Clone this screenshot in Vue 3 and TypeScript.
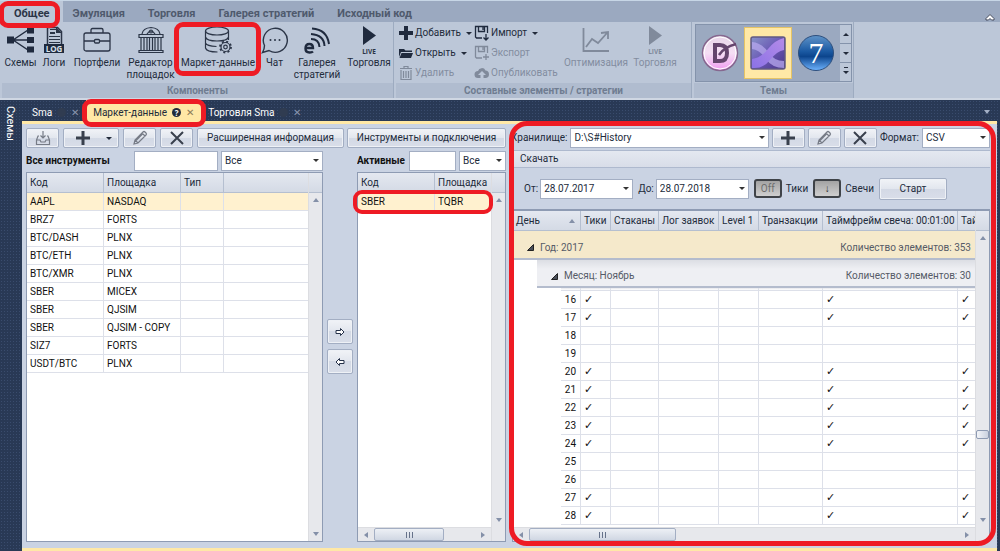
<script setup lang="ts">
import { ref } from 'vue'

interface Instrument { code: string; board: string }

const ribbonTabs = ['Общее', 'Эмуляция', 'Торговля', 'Галерея стратегий', 'Исходный код']
const activeTab = ref('Общее')

const instruments: Instrument[] = [
  { code: 'AAPL', board: 'NASDAQ' },
  { code: 'BRZ7', board: 'FORTS' },
  { code: 'BTC/DASH', board: 'PLNX' },
  { code: 'BTC/ETH', board: 'PLNX' },
  { code: 'BTC/XMR', board: 'PLNX' },
  { code: 'SBER', board: 'MICEX' },
  { code: 'SBER', board: 'QJSIM' },
  { code: 'SBER', board: 'QJSIM - COPY' },
  { code: 'SIZ7', board: 'FORTS' },
  { code: 'USDT/BTC', board: 'PLNX' },
]
const selected = ref(0)

const holidays = [18, 19, 25, 26]
const days = Array.from({ length: 13 }, (_, i) => 16 + i).map((day) => ({
  day,
  loaded: !holidays.includes(day),
}))

const from = ref('28.07.2017')
const to = ref('28.07.2018')
</script>

<template>
  <div class="app">
    <nav class="ribbon-tabs">
      <button
        v-for="tab in ribbonTabs"
        :key="tab"
        class="ribbon-tab"
        :class="{ active: tab === activeTab }"
        @click="activeTab = tab"
      >
        {{ tab }}
        <span v-if="tab === 'Общее'" class="ring ring-general"></span>
      </button>
      <button class="collapse" aria-label="Свернуть ленту">
        <svg width="10" height="8" viewBox="0 0 10 8"><path d="M1 5.5 5 1.5 9 5.5V7H6.500L5 5.500 3.500 7H1z" fill="#fff" stroke="#444b5c" /></svg>
      </button>
    </nav>

    <section class="ribbon">
      <div class="group">
        <div class="group-body">
          <button class="big w37">
            <svg width="28" height="28" viewBox="0 0 28 28"><path d="M6 14 21 4M6 14H21M6 14 21 24" stroke="#1f2a3e" stroke-width="1.500" fill="none" /><path d="M0 10.500h7v7H0zM20 1.500h7v6h-7zM20 11h7v6h-7zM20 20.500h7v6h-7z" fill="#1f2a3e" /></svg>
            <span>Схемы</span>
          </button>
          <button class="big w30">
            <svg width="22" height="28" viewBox="0 0 22 28"><path d="M4.500 18V1.500h10l4 4V18" fill="none" stroke="#2b3547" stroke-width="1.500" /><path d="M13 1v6h6zM7 6h5v2H7z" fill="#2b3547" /><path d="M6 10.500h11M6 13.500h11M6 16.500h11M7 3.500h6" stroke="#2b3547" /><path d="M1 18h20v9H1z" fill="#1f2a3e" /><text x="11" y="25.500" text-anchor="middle" font-family="Open Sans, sans-serif" font-size="8" font-weight="700" fill="#dbe2ec">LOG</text></svg>
            <span>Логи</span>
          </button>
          <button class="big w56">
            <svg width="28" height="28" viewBox="0 0 28 28" fill="none" stroke="#2b3547" stroke-width="1.300"><rect x="1" y="7" width="26" height="18" rx="2" /><path d="M8 7V4q0-1.500 1.500-1.500h9Q20 2.500 20 4v3M1 15h10M17 15h10" /><rect x="11.500" y="13.500" width="5" height="3.500" rx="1" /></svg>
            <span>Портфели</span>
          </button>
          <button class="big w51">
            <svg width="28" height="28" viewBox="0 0 28 28" fill="none" stroke="#2b3547" stroke-width="1.200"><path d="M5 8q1-6 9-6.500 8 .5 9 6.500M2 8.500h24v3H2zM4 12v12M7 12v12M10 12v12M12.500 12v12M15.500 12v12M18 12v12M21 12v12M24 12v12M2 24.500h24v2H2zM10 8q4-6 8 0" /><circle cx="14" cy="5.500" r="1.500" /></svg>
            <span>Редактор площадок</span>
          </button>
          <button class="big w84">
            <svg width="28" height="28" viewBox="0 0 28 28" fill="none" stroke="#2b3547" stroke-width="1.200"><ellipse cx="13" cy="5" rx="11.500" ry="4" /><path d="M1.500 5v17q1 4 12 4M24.500 5v9M1.500 11q1 4 11.500 4t11.500-4M1.500 17q1 3 11 3.500" /><circle cx="21.500" cy="21" r="4.500" /><circle cx="21.500" cy="21" r="1.800" /><circle cx="21.500" cy="21" r="5.500" stroke-width="1.800" stroke-dasharray="2 2.320" /></svg>
            <span class="single">Маркет-данные</span>
            <i class="ring ring-market"></i>
          </button>
          <button class="big w29">
            <svg width="28" height="28" viewBox="0 0 28 28" fill="none"><path d="M3.500 19.500A12 12 0 1 1 8 24.500L1.500 26.500Q3.500 23 3.500 19.500z" stroke="#2b3547" stroke-width="1.400" /><g fill="#2b3547"><circle cx="9.500" cy="14" r="1" /><circle cx="14" cy="14" r="1" /><circle cx="18.500" cy="14" r="1" /></g></svg>
            <span>Чат</span>
          </button>
          <button class="big w56">
            <svg width="28" height="28" viewBox="0 0 28 28" fill="none" stroke="#1f2a3e"><path d="M2.500 22H10q0-4-3.700-4-3.800 0-3.800 4.500 0 4 4 4 2.500 0 3.500-1" stroke-width="2.400" /><path d="M8 13q8 0 8.500 8M8 8q13 1 13.500 12M9 2.500Q24 3.500 26 18" stroke-width="2" /></svg>
            <span>Галерея стратегий</span>
          </button>
          <button class="big w48">
            <svg width="28" height="28" viewBox="0 0 28 28"><path d="m8 0 13 9.500L8 19z" fill="#1f2a3e" /><text x="14" y="27.500" text-anchor="middle" font-family="Open Sans, sans-serif" font-size="6.500" font-weight="700" fill="#2b3547">LIVE</text></svg>
            <span>Торговля</span>
          </button>
        </div>
        <div class="caption">Компоненты</div>
      </div>

      <div class="group">
        <div class="group-body edit">
          <div class="smalls">
            <button class="small">
              <svg width="16" height="16" viewBox="0 0 16 16"><path d="M6 1h4v5h5v4h-5v5H6v-5H1V6h5z" fill="#1f2a3e" /></svg>Добавить<b class="tri"></b>
            </button>
            <button class="small">
              <svg width="16" height="16" viewBox="0 0 16 16"><path d="M1 4h5l1.500 1.500H14V7H3l-2 5z" fill="#1f2a3e" /><path d="M3.500 8H15l-2 5H1.500z" fill="#1f2a3e" /></svg>Открыть<b class="tri"></b>
            </button>
            <button class="small" disabled>
              <svg width="16" height="16" viewBox="0 0 16 16" fill="none" stroke="#808a9b" stroke-width="1.200"><path d="M3 5v9.500h10V5M2 3.500h12M6 3V1.500h4V3M5.500 6v7M8 6v7M10.500 6v7" /></svg>Удалить
            </button>
          </div>
          <div class="smalls second">
            <button class="small">
              <svg width="16" height="16" viewBox="0 0 16 16" fill="none" stroke="#1f2a3e" stroke-width="1.300"><path d="M8 13H2.500L1.500 12V1.500h12V8M4.500 1.500v5h6v-5M9 2v3M12 9v6M9.500 12.500 12 15l2.500-2.500" /></svg>Импорт<b class="tri"></b>
            </button>
            <button class="small" disabled>
              <svg width="16" height="16" viewBox="0 0 16 16" fill="none" stroke="#808a9b" stroke-width="1.300"><path d="M8 13H2.500L1.500 12V1.500h12V8M4.500 1.500v5h6v-5M9 2v3M12 9v6M9 12h6" /></svg>Экспорт
            </button>
            <button class="small" disabled>
              <svg width="16" height="16" viewBox="0 0 16 16"><path d="M4 13a3.500 3.500 0 0 1 0-7 4 4 0 0 1 7.500-.5A3.800 3.800 0 0 1 12 13H9.500v-3H12L8 6l-4 4h2.500v3z" fill="#808a9b" /></svg>Опубликовать
            </button>
          </div>
          <button class="big w68" disabled>
            <svg width="28" height="28" viewBox="0 0 28 28" fill="none" stroke="#808a9b" stroke-width="1.800"><path d="M1.500 2v23H27M4 21l6-8 6 4 9-10M19 7l7-1v7" /></svg>
            <span>Оптимизация</span>
          </button>
          <button class="big w50" disabled>
            <svg width="28" height="28" viewBox="0 0 28 28"><path d="m8 0 13 9.500L8 19z" fill="#808a9b" /><text x="14" y="27.500" text-anchor="middle" font-family="Open Sans, sans-serif" font-size="6.500" font-weight="700" fill="#808a9b">LIVE</text></svg>
            <span>Торговля</span>
          </button>
        </div>
        <div class="caption">Составные элементы / стратегии</div>
      </div>

      <div class="group">
        <div class="group-body">
          <div class="gallery">
            <button class="theme" aria-label="D">
              <svg width="38" height="38" viewBox="0 0 38 38">
                <defs><linearGradient id="pk" x1="0" y1="0" x2="0" y2="1"><stop offset="0" stop-color="#e8d5e8" /><stop offset=".5" stop-color="#f5dff4" /><stop offset="1" stop-color="#f09af0" /></linearGradient></defs>
                <circle cx="19" cy="19" r="17.500" fill="url(#pk)" stroke="#86688f" stroke-width="1.500" /><circle cx="19" cy="19" r="16" fill="none" stroke="#fff" />
                <path d="M12 9h7q9 0 9 10t-9 10h-7zM16 13v12h3q5 0 5-6t-5-6z" fill="#65456d" fill-rule="evenodd" /><path d="M18 21q5-8 17-11" stroke="#65456d" stroke-width="2.500" fill="none" />
              </svg>
            </button>
            <button class="theme chosen" aria-label="X">
              <svg width="36" height="34" viewBox="0 0 36 34">
                <defs><linearGradient id="pu" x1="0" y1="0" x2="1" y2="1"><stop offset="0" stop-color="#8793c8" /><stop offset=".5" stop-color="#6a58b4" /><stop offset="1" stop-color="#4b3788" /></linearGradient><linearGradient id="pl" x1="0" y1="1" x2="1" y2="0"><stop offset="0" stop-color="#8b72e6" /><stop offset="1" stop-color="#b48be8" /></linearGradient></defs>
                <rect x="1" y="1" width="34" height="32" rx="2" fill="url(#pu)" stroke="#625983" stroke-width="1.500" />
                <path d="M2 6q10 1 16 10T34 25v7q-12 0-18-9T2 13z" fill="#b7a8ee" opacity=".75" /><path d="M2 23q9-1 16-10T34 2v12q-7 1-14 10T2 32z" fill="url(#pl)" />
              </svg>
            </button>
            <button class="theme" aria-label="7">
              <svg width="38" height="38" viewBox="0 0 38 38">
                <defs><linearGradient id="bl" x1="0" y1="0" x2="0" y2="1"><stop offset="0" stop-color="#5f93c8" /><stop offset=".45" stop-color="#1b5aa3" /><stop offset=".6" stop-color="#0c458d" /><stop offset="1" stop-color="#6fb4ff" /></linearGradient></defs>
                <circle cx="19" cy="19" r="17.500" fill="url(#bl)" stroke="#2e4f7d" /><text x="19" y="29" text-anchor="middle" font-family="Liberation Serif, serif" font-size="30" fill="#fff">7</text>
              </svg>
            </button>
            <div class="spin">
              <button aria-label="Вверх"><b class="tri up"></b></button>
              <button aria-label="Вниз"><b class="tri"></b></button>
              <button aria-label="Все темы"><b class="tri more"></b></button>
            </div>
          </div>
        </div>
        <div class="caption">Темы</div>
      </div>
    </section>

    <div class="workspace">
      <aside class="side"><button>Схемы</button></aside>
      <main class="docs">
        <div class="doc-tabs">
          <div class="doc"><button class="doc-name">Sma</button><span class="help dim"></span><button class="x" aria-label="Закрыть">✕</button></div>
          <div class="doc current"><button class="doc-name">Маркет-данные</button><span class="help">?</span><button class="x" aria-label="Закрыть">✕</button><i class="ring ring-doc"></i></div>
          <div class="doc"><button class="doc-name">Торговля Sma</button><span class="help dim"></span><button class="x" aria-label="Закрыть">✕</button></div>
          <b class="tri pale"></b>
        </div>

        <div class="page">
          <section class="all">
            <div class="tools">
              <button class="btn w33" aria-label="Загрузить"><svg width="16" height="16" viewBox="0 0 16 16" fill="none" stroke="#767b86" stroke-width="1.200"><path d="M4 6H3L1.500 10v4.500h13V10L13 6h-1M1.500 10H5l1 2h4l1-2h3.500M8 1v7M5.500 5.500 8 8l2.500-2.500" /></svg></button>
              <button class="btn w56 split" aria-label="Добавить"><svg width="14" height="14" viewBox="0 0 14 14"><path d="M5.500 0h3v5.500H14v3H8.500V14h-3V8.500H0v-3h5.500z" fill="#39404d" /></svg><b class="tri"></b></button>
              <button class="btn w33" aria-label="Изменить"><svg width="16" height="16" viewBox="0 0 16 16" fill="none" stroke="#767b86" stroke-width="1.200"><path d="m2 14 1-4 8-8q1-1 2 0l1 1q1 1 0 2l-8 8zM10 3l3 3M4 10.500l7-7M3 10l3 3" /></svg></button>
              <button class="btn w33" aria-label="Удалить"><svg width="14" height="14" viewBox="0 0 14 14"><path d="m1 1 12 12M13 1 1 13" stroke="#39404d" stroke-width="2" /></svg></button>
              <button class="btn grow">Расширенная информация</button>
            </div>
            <div class="filter">
              <label for="find-all" class="title">Все инструменты</label>
              <input id="find-all" class="field w84" type="text" />
              <span class="combo w102"><select aria-label="Тип инструмента"><option>Все</option></select></span>
            </div>
            <div class="frame">
              <div class="sheet">
                <table class="list">
                  <colgroup><col class="w77" /><col class="w77" /><col class="w43" /><col /></colgroup>
                  <thead><tr><th>Код</th><th>Площадка</th><th>Тип</th><th></th></tr></thead>
                  <tbody>
                    <tr v-for="(item, i) in instruments" :key="i" :class="{ picked: i === selected }" @click="selected = i">
                      <td>{{ item.code }}</td><td>{{ item.board }}</td><td></td><td></td>
                    </tr>
                  </tbody>
                </table>
              </div>
              <div class="vbar"><span class="cap"></span><b class="tri bar up"></b><b class="tri bar"></b></div>
            </div>
          </section>

          <div class="move">
            <button class="btn" aria-label="Добавить в активные"><svg width="10" height="8" viewBox="0 0 10 8"><path d="M1 2.500h4.500v-2L9 4 5.500 7.500v-2H1z" fill="#fff" stroke="#253149" /></svg></button>
            <button class="btn" aria-label="Убрать из активных"><svg width="10" height="8" viewBox="0 0 10 8"><path d="M9 2.500H4.500v-2L1 4l3.500 3.500v-2H9z" fill="#fff" stroke="#253149" /></svg></button>
          </div>

          <section class="active-list">
            <div class="tools wide"><button class="btn grow">Инструменты и подключения</button></div>
            <div class="filter">
              <label for="find-active" class="title">Активные</label>
              <input id="find-active" class="field w47" type="text" />
              <span class="combo w47"><select aria-label="Тип активных"><option>Все</option></select></span>
            </div>
            <div class="frame">
              <div class="sheet">
                <table class="list">
                  <colgroup><col class="w77" /><col /></colgroup>
                  <thead><tr><th>Код</th><th>Площадка</th></tr></thead>
                  <tbody><tr class="picked"><td>SBER</td><td>TQBR</td></tr></tbody>
                </table>
                <div class="hbar"><b class="tri bar left"></b><span class="thumb"></span><b class="tri bar right"></b></div>
              </div>
              <div class="vbar"><span class="cap"></span><b class="tri bar up"></b><b class="tri bar"></b><span class="foot"></span></div>
              <i class="ring ring-row"></i>
            </div>
          </section>

          <section class="storage">
            <div class="tools path">
              <label for="store">Хранилище:</label>
              <span class="combo fill"><select id="store"><option>D:\S#History</option></select></span>
              <button class="btn w33" aria-label="Добавить хранилище"><svg width="14" height="14" viewBox="0 0 14 14"><path d="M5.500 0h3v5.500H14v3H8.500V14h-3V8.500H0v-3h5.500z" fill="#39404d" /></svg></button>
              <button class="btn w33" aria-label="Изменить хранилище"><svg width="16" height="16" viewBox="0 0 16 16" fill="none" stroke="#767b86" stroke-width="1.200"><path d="m2 14 1-4 8-8q1-1 2 0l1 1q1 1 0 2l-8 8zM10 3l3 3M4 10.500l7-7M3 10l3 3" /></svg></button>
              <button class="btn w33" aria-label="Удалить хранилище"><svg width="14" height="14" viewBox="0 0 14 14"><path d="m1 1 12 12M13 1 1 13" stroke="#39404d" stroke-width="2" /></svg></button>
              <label for="fmt">Формат:</label>
              <span class="combo w68"><select id="fmt"><option>CSV</option></select></span>
            </div>
            <h2>Скачать</h2>
            <div class="period">
              <label for="from">От:</label>
              <span class="combo w93"><input id="from" v-model="from" type="text" /></span>
              <label for="to" class="next">До:</label>
              <span class="combo w93"><input id="to" v-model="to" type="text" /></span>
              <button id="ticks" class="toggle off">Off</button>
              <label for="ticks">Тики</label>
              <button id="candles" class="toggle">↓</button>
              <label for="candles">Свечи</label>
              <button class="btn start">Старт</button>
            </div>
            <div class="frame history">
              <div class="sheet">
                <table class="list calendar">
                  <colgroup><col class="w24" /><col class="w24" /><col class="w20" /><col class="w30" /><col class="w48" /><col class="w60" /><col class="w40" /><col class="w64" /><col class="w135" /><col /></colgroup>
                  <thead>
                    <tr><th colspan="3"><span class="sorted">День<b class="tri bar up"></b></span></th><th>Тики</th><th>Стаканы</th><th>Лог заявок</th><th>Level 1</th><th>Транзакции</th><th>Таймфрейм свеча: 00:01:00</th><th>Тай</th></tr>
                  </thead>
                  <tbody>
                    <tr class="year"><td colspan="10"><div class="fold"><svg width="7" height="7" viewBox="0 0 7 7"><path d="M6.500.5v6h-6z" fill="#4a4f5a" stroke="#222" /></svg><span>Год: 2017</span><span class="count">Количество элементов: 353</span></div></td></tr>
                    <tr class="month"><td class="gap"></td><td colspan="9" class="band"><div class="fold"><svg width="7" height="7" viewBox="0 0 7 7"><path d="M6.500.5v6h-6z" fill="#4a4f5a" stroke="#222" /></svg><span>Месяц: Ноябрь</span><span class="count">Количество элементов: 30</span></div></td></tr>
                    <tr class="sliver"><td class="gap"></td><td class="gap"></td><td></td><td></td><td></td><td></td><td></td><td></td><td></td><td></td></tr>
                    <tr v-for="d in days" :key="d.day">
                      <td class="gap"></td><td class="gap"></td>
                      <td class="num">{{ d.day }}</td>
                      <td class="mark">{{ d.loaded ? '✓' : '' }}</td><td></td><td></td><td></td><td></td>
                      <td class="mark">{{ d.loaded ? '✓' : '' }}</td>
                      <td class="mark">{{ d.loaded ? '✓' : '' }}</td>
                    </tr>
                  </tbody>
                </table>
                <div class="hbar"><b class="tri bar left"></b><span class="thumb long"></span><b class="tri bar right"></b></div>
              </div>
              <div class="vbar"><span class="cap"></span><b class="tri bar up"></b><span class="knob"></span><b class="tri bar"></b><span class="foot"></span></div>
            </div>
            <i class="ring ring-storage"></i>
          </section>
        </div>
      </main>
    </div>
  </div>
</template>

<style>
body { margin: 0; }
</style>

<style scoped>
* { box-sizing: border-box; }
.app {
  min-height: 100vh;
  display: flex;
  flex-direction: column;
  font: 10px/14px Roboto, "Noto Sans", sans-serif;
  color: #222b3b;
  background: #293955;
  overflow: hidden;
}
button, input, select { font: inherit; color: inherit; margin: 0; }
button { padding: 0; border: 0; background: none; white-space: nowrap; }
svg { display: block; flex: none; }

.ring { position: absolute; border: 5px solid #ee1b24; border-radius: 9px; pointer-events: none; z-index: 5; }
.ring-general { inset: 0 3px -6px -1px; }
.ring-market { inset: 0 -1px 7px -2px; }
.ring-doc { inset: -1px -5px -6px -4px; }
.ring-row { top: 17px; left: -5px; right: 12px; height: 24px; border-width: 4px; }
.ring-storage { inset: -3px 1px -4px -1px; border-radius: 18px; }

.tri { width: 0; height: 0; border: 3px solid transparent; border-top-color: #222b3b; border-bottom: 0; flex: none; }
.tri.up { transform: rotate(180deg); }
.tri.left { transform: rotate(90deg); }
.tri.right { transform: rotate(-90deg); }
.tri.bar { border-width: 4px 3px 0; border-top-color: #8490a8; }
.tri.pale { border-width: 4px 3px 0; border-top-color: #a4b0c6; margin: 10px 7px 0 auto; }

.ribbon-tabs { display: flex; height: 22px; background: #9ba9c0; border-top: 1px solid #c7d6e6; color: #4f5a6d; }
.ribbon-tab { position: relative; padding: 4px 13px 0 10px; font-size: 11px; font-weight: 700; }
.ribbon-tab.active { background: #bcc7d8; color: #2b3547; padding: 4px 13px 0 14px; }
.collapse { margin: 10px 5px 0 auto; }

.ribbon { display: flex; height: 78px; background: #bcc7d8; padding-left: 2px; border-bottom: 2px solid #cfd7e3; }
.group { display: flex; flex-direction: column; border-right: 1px solid #9dabc0; margin-right: 2px; }
.group-body { display: flex; height: 61px; }
.caption { height: 15px; background: #b0bccf; color: #6f7c91; font-weight: 700; text-align: center; line-height: 15px; }
.big { position: relative; flex: none; display: flex; flex-direction: column; align-items: center; padding-top: 4px; line-height: 12px; white-space: normal; }
.big span { margin-top: 3px; }
.big .single { white-space: nowrap; }
.w20 { width: 20px; } .w24 { width: 24px; } .w29 { width: 29px; } .w30 { width: 30px; }
.w33 { width: 33px; } .w37 { width: 37px; } .w40 { width: 40px; } .w43 { width: 43px; }
.w47 { width: 47px; } .w48 { width: 48px; } .w50 { width: 50px; } .w51 { width: 51px; }
.w56 { width: 56px; } .w60 { width: 60px; } .w64 { width: 64px; } .w68 { width: 68px; }
.w77 { width: 77px; } .w84 { width: 84px; } .w93 { width: 93px; } .w102 { width: 102px; }
.w135 { width: 135px; }
button:disabled { color: #838da0; }
.edit { padding: 0 11px 0 2px; }
.smalls { display: flex; flex-direction: column; flex: none; width: 76px; }
.smalls.second { width: 88px; }
.small { display: flex; align-items: center; gap: 1px; height: 20px; padding-top: 2px; }
.small .tri { margin-left: 4px; }

.gallery { display: flex; width: 157px; height: 58px; margin: 2px 1px 0; background: #9ba9c0; border: 1px solid #8493ab; }
.theme { width: 48px; display: grid; place-items: center; }
.theme.chosen { background: #ffe8a6; border: 1px solid #e5c365; margin: 2px 0; }
.spin { margin-left: auto; width: 11px; display: grid; grid-template-rows: 1fr 1fr 1fr; gap: 1px; background: #8493ab; }
.spin button { display: grid; place-items: center; background: #bcc7d8; }
.tri.more { box-shadow: 0 -5px 0 -1px #222b3b; }

.workspace { flex: 1; display: flex; background: #293955 radial-gradient(#3a4c6d 0.5px, transparent 1px) 0 0 / 3px 3px; }
.side { width: 22px; }
.side button { writing-mode: vertical-rl; color: #fff; font-size: 11px; margin: 6px 0 0 3px; }
.docs { flex: 1; min-width: 0; display: flex; flex-direction: column; margin-right: 3px; }
.doc-tabs { display: flex; height: 21px; padding: 0 0 0 3px; }
.doc { position: relative; display: flex; align-items: center; color: #fff; padding: 4px 7px 0 7px; }
.doc .x { color: #8995ad; font-size: 10px; margin-left: 5px; }
.doc.current { background: #ffe8a6; color: #222b3b; }
.doc.current .x { color: #8b7c58; }
.help { width: 9px; height: 9px; border-radius: 50%; background: #222b3b; color: #fff; font: 700 8px/9px "Open Sans", sans-serif; text-align: center; margin-left: 5px; }
.help.dim { background: #303c51; }

.page { flex: 1; display: flex; background: #cad3e3; border-top: 3px solid #ffe8a6; border-bottom: 3px solid #ffe8a6; padding: 0 0 6px 4px; }
.all, .active-list, .storage { display: flex; flex-direction: column; min-width: 0; }
.all { flex: 0 0 30%; min-width: 297px; }
.active-list { flex: 0 0 149px; }
.storage { position: relative; flex: 1; margin-left: 4px; padding: 0 7px 0 1px; }
.tools { display: flex; gap: 4px; height: 24px; padding-top: 4px; }
.all .tools { margin-right: -21px; }
.wide { margin-left: -10px; }
.filter { display: flex; align-items: center; gap: 3px; height: 20px; margin: 3px 0 1px; }
.title { flex: 1; min-width: 0; font-weight: 700; color: #111; white-space: nowrap; overflow: hidden; }
.btn { display: flex; align-items: center; justify-content: center; border: 1px solid #a3aec3; border-radius: 2px; background: linear-gradient(#f1f3f7, #e2e6ee 50%, #d3d9e5 50%, #d9dee9); box-shadow: inset 0 0 0 1px #eef1f6; }
.grow { flex: 1; }
.split { gap: 16px; padding-left: 6px; }
.field { height: 20px; border: 1px solid #a3aec3; background: #fff; padding: 0 3px; }
.combo { position: relative; display: block; height: 20px; background: #fff; border: 1px solid #a3aec3; }
.combo select, .combo input { width: 100%; height: 100%; border: 0; padding: 0 14px 0 3px; background: none; appearance: none; display: block; outline: 0; }
.combo::after { content: ""; position: absolute; right: 3px; top: 50%; margin-top: -2px; border: 3px solid transparent; border-top-color: #333; border-bottom: 0; pointer-events: none; }

.frame { position: relative; flex: 1; display: flex; border: 1px solid #8e9bb3; background: #fff; }
.sheet { flex: 1; min-width: 0; display: flex; flex-direction: column; overflow: hidden; }
.list { width: 100%; table-layout: fixed; border-collapse: separate; border-spacing: 0; color: #111; }
.list th { height: 20px; padding: 0 0 0 3px; text-align: left; font-weight: 400; white-space: nowrap; overflow: hidden; background: linear-gradient(#e4e8f0, #d4dae5); border-right: 1px solid #b5bfd0; border-bottom: 1px solid #b5bfd0; color: #222b3b; }
.list td { height: 18px; padding: 0 0 0 3px; line-height: 14px; white-space: nowrap; border-right: 1px solid #dde0e9; border-bottom: 1px solid #dde0e9; }
.list tr > :last-child { border-right: 0; }
.picked td { background: #fff1cf; }
.vbar { width: 14px; display: flex; flex-direction: column; align-items: center; background: #e7e8ec; border-left: 1px solid #dcdde1; }
.vbar .cap { align-self: stretch; height: 20px; background: linear-gradient(#e4e8f0, #d4dae5); border-bottom: 1px solid #b5bfd0; margin-bottom: 5px; }
.vbar .tri:not(.up) { margin: auto 0 5px; }
.foot { height: 14px; flex: none; }
.hbar { margin-top: auto; height: 14px; display: flex; align-items: center; background: #e7e8ec; border-top: 1px solid #dcdde1; padding: 0 5px; }
.hbar .right { margin-left: auto; }
.thumb { width: 70px; height: 13px; margin-left: 5px; border: 1px solid #a3aec3; border-radius: 2px; background: linear-gradient(90deg, #66728a 1px, transparent 1px 3px, #66728a 3px 4px, transparent 4px 6px, #66728a 6px 7px) center / 7px 6px no-repeat, linear-gradient(#edf0f5, #d0d7e3); }
.thumb.long { width: 147px; }
.knob { width: 13px; height: 9px; margin-top: 190px; border: 1px solid #8e9bb3; border-radius: 2px; background: linear-gradient(90deg, #f2f4f8, #cbd2df); }

.move { flex: 1 0 34px; max-width: 34px; display: flex; flex-direction: column; align-items: center; gap: 5px; padding-top: 195px; }
.move .btn { width: 26px; height: 25px; }

.path { align-items: stretch; gap: 3px; padding-bottom: 0; }
.path label { align-self: center; }
.combo.fill { flex: 1; }
h2 { margin: 2px 0 0 1px; height: 18px; font-size: 10px; line-height: 16px; font-weight: 400; padding-left: 8px; background: linear-gradient(#e4e8f0, #d8dde8); border: solid #aeb9ce; border-width: 1px 0; }
.period { display: flex; align-items: center; height: 41px; padding-left: 13px; gap: 2px; white-space: nowrap; }
.next { margin-left: 3px; }
.toggle { width: 28px; height: 19px; border: 2px solid #3f4348; border-radius: 3px; background: linear-gradient(#a3a3a3, #cfcfcf); color: #222; margin: 0 2px 0 3px; }
.toggle.off { color: #6d6d6d; }
.start { width: 68px; height: 22px; margin-left: 3px; }
.history { border-top: 2px solid #8e9bb3; margin-left: 1px; }
.sorted { display: flex; align-items: center; justify-content: space-between; padding-right: 5px; }
.calendar .gap { border: 0; }
.calendar .year td { height: 29px; background: #f5e9cb; border-bottom: 2px solid #b4bccd; color: #555b67; padding: 0; }
.calendar .month td { height: 28px; padding: 0; }
.calendar .month .band { background: linear-gradient(#dcdee4, #eeeff3 9px); border-bottom: 2px solid #b4bccd; color: #555b67; }
.calendar .sliver td { height: 3px; background: linear-gradient(#e7e8ec, #fff); }
.calendar .sliver .gap { background: #fff; }
.fold { display: flex; align-items: center; padding: 6px 4px 0 14px; }
.fold span { margin-left: 6px; }
.fold .count { margin-left: auto; }
.calendar .num { padding: 0 4px 0 0; text-align: right; }
.mark { font-family: "DejaVu Sans", sans-serif; font-size: 11px; }
</style>
